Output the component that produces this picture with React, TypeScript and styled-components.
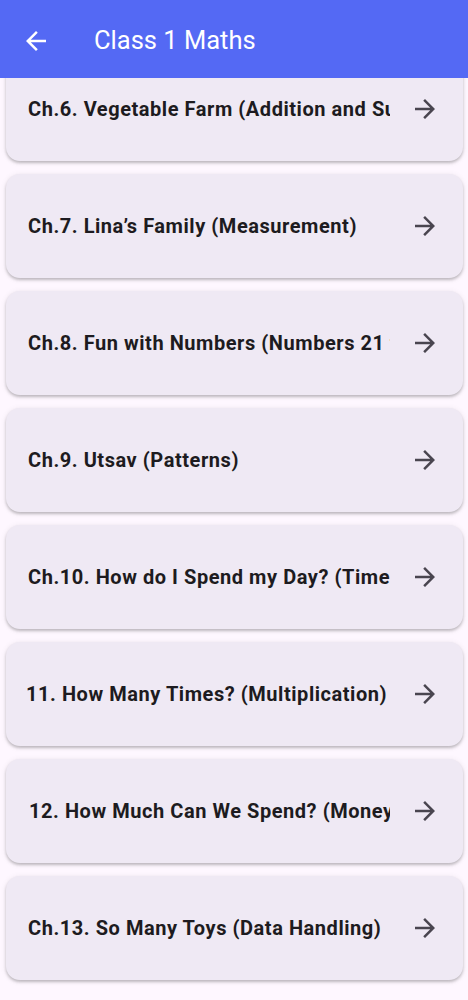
import React, { useLayoutEffect, useRef } from "react";
import styled, { createGlobalStyle } from "styled-components";

const GlobalStyle = createGlobalStyle`
  html, body { margin: 0; padding: 0; }
  body {
    background: #fef7ff;
    font-family: Roboto, "Noto Sans", "Liberation Sans", sans-serif;
    -webkit-font-smoothing: antialiased;
  }
`;

const Screen = styled.div`
  height: 100vh;
  display: flex;
  flex-direction: column;
  overflow: hidden;
  background: #fef7ff;
`;

const AppBar = styled.header`
  position: relative;
  z-index: 2;
  flex: 0 0 78px;
  height: 78px;
  background: #5469f4;
  display: flex;
  align-items: center;
  padding-left: 21px;
  gap: 43px;
  box-sizing: border-box;
`;

const IconButton = styled.button`
  border: 0;
  padding: 0;
  background: transparent;
  display: flex;
  align-items: center;
  justify-content: center;
  width: 30px;
  height: 30px;
  color: #ffffff;
  margin-top: 3px;
`;

const Title = styled.h1`
  margin: 0;
  font-size: 25.5px;
  font-weight: 400;
  color: #ffffff;
  letter-spacing: 0;
  margin-top: 2px;
`;

const Viewport = styled.div`
  position: relative;
  flex: 1 1 auto;
  overflow: hidden;
`;

const List = styled.div`
  display: flex;
  flex-direction: column;
  gap: 13px;
  padding: 8px 5px 40px 6px;
`;

const Card = styled.div`
  height: 104px;
  flex: 0 0 104px;
  box-sizing: border-box;
  background: #efe9f4;
  border-radius: 14px;
  box-shadow: 0 2px 3px rgba(0, 0, 0, 0.22), 0 1px 6px rgba(0, 0, 0, 0.08);
  display: flex;
  align-items: center;
  padding: 0 23px 0 22px;
  gap: 20px;
`;

const CardTitle = styled.span<{ $shift?: number }>`
  flex: 1 1 auto;
  min-width: 0;
  overflow: hidden;
  white-space: nowrap;
  font-size: 20px;
  font-weight: 700;
  letter-spacing: 0.55px;
  color: #1d1b20;
  margin-left: ${(p) => p.$shift ?? 0}px;
`;

const Trailing = styled.span`
  flex: 0 0 30px;
  width: 30px;
  height: 30px;
  display: flex;
  align-items: center;
  justify-content: center;
  color: #49454f;
`;

const ArrowForward = () => (
  <svg width="30" height="30" viewBox="0 0 24 24" fill="currentColor" aria-hidden>
    <path d="M12 4l-1.41 1.41L16.17 11H4v2h12.17l-5.58 5.59L12 20l8-8z" />
  </svg>
);

const ArrowBack = () => (
  <svg width="30" height="30" viewBox="0 0 24 24" fill="currentColor" aria-hidden>
    <path d="M20 11H7.83l5.59-5.59L12 4l-8 8 8 8 1.41-1.41L7.83 13H20v-2z" />
  </svg>
);

const chapters: { title: string; shift?: number }[] = [
  { title: "Ch.1. Finding the Furry Cat! (Pre-number Concepts)" },
  { title: "Ch.2. What is Long, What is Round? (Shapes)" },
  { title: "Ch.3. Mango Treat (Numbers 1 to 9)" },
  { title: "Ch.4. Making 10 (Numbers 1 to 10)" },
  { title: "Ch.5. How Many? (Addition and Subtraction)" },
  { title: "Ch.6. Vegetable Farm (Addition and Subtraction up to 20)" },
  { title: "Ch.7. Lina’s Family (Measurement)" },
  { title: "Ch.8. Fun with Numbers (Numbers 21 to 99)" },
  { title: "Ch.9. Utsav (Patterns)" },
  { title: "Ch.10. How do I Spend my Day? (Time)" },
  { title: "11. How Many Times? (Multiplication)", shift: -2 },
  { title: "12. How Much Can We Spend? (Money)", shift: 1 },
  { title: "Ch.13. So Many Toys (Data Handling)" },
];

export default function App() {
  const viewportRef = useRef<HTMLDivElement>(null);
  const anchorRef = useRef<HTMLDivElement>(null);

  useLayoutEffect(() => {
    const vp = viewportRef.current;
    const anchor = anchorRef.current;
    if (vp && anchor) {
      vp.scrollTop = anchor.offsetTop + 21;
    }
  }, []);

  return (
    <>
      <GlobalStyle />
      <Screen>
        <AppBar>
          <IconButton aria-label="Back">
            <ArrowBack />
          </IconButton>
          <Title>Class 1 Maths</Title>
        </AppBar>
        <Viewport ref={viewportRef}>
          <List>
            {chapters.map((c, i) => (
              <Card key={c.title} ref={i === 5 ? anchorRef : undefined}>
                <CardTitle $shift={c.shift}>{c.title}</CardTitle>
                <Trailing>
                  <ArrowForward />
                </Trailing>
              </Card>
            ))}
          </List>
        </Viewport>
      </Screen>
    </>
  );
}
